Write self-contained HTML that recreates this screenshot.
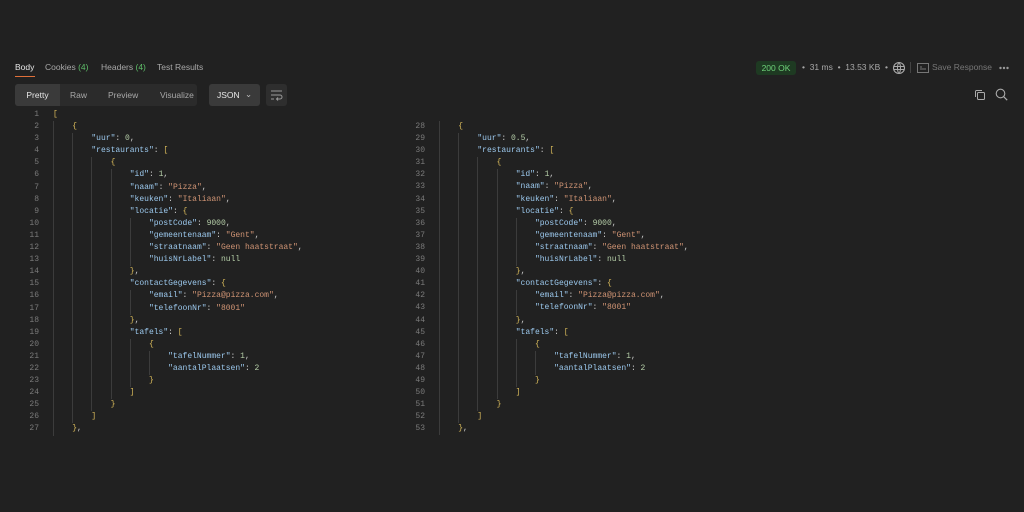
<!DOCTYPE html>
<html><head><meta charset="utf-8"><style>
body{margin:0;width:1024px;height:512px;background:#212121;overflow:hidden;font-family:"Liberation Sans",sans-serif;position:relative}
.abs{position:absolute}
.tab{position:absolute;top:62px;font-size:8.5px;color:#a8a8a8}
.code{position:absolute;font-family:"Liberation Mono",monospace;font-size:8px;line-height:12.1px;color:#cfcfcf;white-space:pre}
.ln{position:absolute;font-family:"Liberation Mono",monospace;font-size:8px;line-height:12.1px;color:#7a7a7a;text-align:right;width:30px;white-space:pre}
.g{display:inline-block;width:19.2px;height:12.1px;border-left:1px solid #3c3c3c;box-sizing:border-box;vertical-align:top}
.k{color:#9cc9ee}.s{color:#d09474}.n{color:#b5cea8}.b{color:#d6b85a}
</style></head><body>
<div class="tab" style="left:15px;color:#e6e6e6">Body</div>
<div class="abs" style="left:15px;top:76px;width:20px;height:1px;background:#e0703a"></div>
<div class="tab" style="left:45px">Cookies <span style="color:#5fbf6a">(4)</span></div>
<div class="tab" style="left:101px">Headers <span style="color:#5fbf6a">(4)</span></div>
<div class="tab" style="left:157px">Test Results</div>

<div class="abs" style="left:756px;top:61px;width:40px;height:14px;background:#1e3a22;border-radius:3px;color:#6fd27a;font-size:8.5px;line-height:14px;text-align:center">200 OK</div>
<div class="abs" style="left:802px;top:62px;font-size:8.5px;color:#a8a8a8">•&nbsp;&nbsp;31 ms&nbsp;&nbsp;•&nbsp;&nbsp;13.53 KB&nbsp;&nbsp;•</div>
<svg class="abs" style="left:892px;top:61px" width="14" height="14" viewBox="0 0 14 14"><circle cx="7" cy="7" r="5.5" fill="none" stroke="#a8a8a8" stroke-width="1.1"/><path d="M1.5 5.5h11M1.5 8.5h11M7 1.5c-2 2-2 9 0 11M7 1.5c2 2 2 9 0 11" fill="none" stroke="#a8a8a8" stroke-width="1"/></svg>
<div class="abs" style="left:910px;top:62px;width:1px;height:11px;background:#444"></div>
<svg class="abs" style="left:917px;top:63px" width="12" height="10" viewBox="0 0 12 10"><rect x="0.5" y="0.5" width="11" height="9" fill="none" stroke="#777"/><path d="M3 6h6M3 4h2" stroke="#777"/></svg>
<div class="abs" style="left:932px;top:62px;font-size:8.5px;color:#777">Save Response</div>
<svg class="abs" style="left:999px;top:66px" width="10" height="4" viewBox="0 0 10 4"><circle cx="1.5" cy="2" r="1.2" fill="#999"/><circle cx="5" cy="2" r="1.2" fill="#999"/><circle cx="8.5" cy="2" r="1.2" fill="#999"/></svg>

<div class="abs" style="left:15px;top:84px;width:182px;height:22px;background:#2b2b2b;border-radius:3px"></div>
<div class="abs" style="left:15px;top:84px;width:45px;height:22px;background:#3a3a3a;border-radius:3px 0 0 3px;color:#e8e8e8;font-size:8.5px;line-height:22px;text-align:center">Pretty</div>
<div class="abs" style="left:70px;top:84px;font-size:8.5px;line-height:22px;color:#a8a8a8">Raw</div>
<div class="abs" style="left:108px;top:84px;font-size:8.5px;line-height:22px;color:#a8a8a8">Preview</div>
<div class="abs" style="left:160px;top:84px;font-size:8.5px;line-height:22px;color:#a8a8a8">Visualize</div>
<div class="abs" style="left:209px;top:84px;width:51px;height:22px;background:#3a3a3a;border-radius:3px;color:#e8e8e8;font-size:8.5px;line-height:22px"><span style="margin-left:8px">JSON</span><span style="position:absolute;left:36px;top:-1px;color:#bbb">⌄</span></div>
<div class="abs" style="left:266px;top:84px;width:21px;height:22px;background:#2e2e2e;border-radius:3px"></div>
<svg class="abs" style="left:270px;top:89px" width="13" height="12" viewBox="0 0 13 12"><path d="M1 2h11M1 6h9a2 2 0 0 1 0 4H7M1 10h3" fill="none" stroke="#999" stroke-width="1"/><path d="M8 8.5l-1.5 1.5 1.5 1.5" fill="none" stroke="#999"/></svg>
<svg class="abs" style="left:974px;top:89px" width="12" height="12" viewBox="0 0 12 12"><rect x="3.5" y="3.5" width="7" height="7" rx="1" fill="none" stroke="#aaa"/><path d="M1.5 8V2.5a1 1 0 0 1 1-1H8" fill="none" stroke="#aaa"/></svg>
<svg class="abs" style="left:995px;top:88px" width="13" height="13" viewBox="0 0 13 13"><circle cx="5.5" cy="5.5" r="4.3" fill="none" stroke="#aaa" stroke-width="1.1"/><path d="M8.7 8.7l3.5 3.5" stroke="#aaa" stroke-width="1.2"/></svg>

<div class="ln" style="left:9px;top:109px">1
2
3
4
5
6
7
8
9
10
11
12
13
14
15
16
17
18
19
20
21
22
23
24
25
26
27</div>
<div class="code" style="left:53px;top:109px"><span class="b">[</span>
<span class="g"></span><span class="b">{</span>
<span class="g"></span><span class="g"></span><span class="k">"uur"</span>: <span class="n">0</span>,
<span class="g"></span><span class="g"></span><span class="k">"restaurants"</span>: <span class="b">[</span>
<span class="g"></span><span class="g"></span><span class="g"></span><span class="b">{</span>
<span class="g"></span><span class="g"></span><span class="g"></span><span class="g"></span><span class="k">"id"</span>: <span class="n">1</span>,
<span class="g"></span><span class="g"></span><span class="g"></span><span class="g"></span><span class="k">"naam"</span>: <span class="s">"Pizza"</span>,
<span class="g"></span><span class="g"></span><span class="g"></span><span class="g"></span><span class="k">"keuken"</span>: <span class="s">"Italiaan"</span>,
<span class="g"></span><span class="g"></span><span class="g"></span><span class="g"></span><span class="k">"locatie"</span>: <span class="b">{</span>
<span class="g"></span><span class="g"></span><span class="g"></span><span class="g"></span><span class="g"></span><span class="k">"postCode"</span>: <span class="n">9000</span>,
<span class="g"></span><span class="g"></span><span class="g"></span><span class="g"></span><span class="g"></span><span class="k">"gemeentenaam"</span>: <span class="s">"Gent"</span>,
<span class="g"></span><span class="g"></span><span class="g"></span><span class="g"></span><span class="g"></span><span class="k">"straatnaam"</span>: <span class="s">"Geen haatstraat"</span>,
<span class="g"></span><span class="g"></span><span class="g"></span><span class="g"></span><span class="g"></span><span class="k">"huisNrLabel"</span>: <span class="n">null</span>
<span class="g"></span><span class="g"></span><span class="g"></span><span class="g"></span><span class="b">}</span>,
<span class="g"></span><span class="g"></span><span class="g"></span><span class="g"></span><span class="k">"contactGegevens"</span>: <span class="b">{</span>
<span class="g"></span><span class="g"></span><span class="g"></span><span class="g"></span><span class="g"></span><span class="k">"email"</span>: <span class="s">"Pizza@pizza.com"</span>,
<span class="g"></span><span class="g"></span><span class="g"></span><span class="g"></span><span class="g"></span><span class="k">"telefoonNr"</span>: <span class="s">"8001"</span>
<span class="g"></span><span class="g"></span><span class="g"></span><span class="g"></span><span class="b">}</span>,
<span class="g"></span><span class="g"></span><span class="g"></span><span class="g"></span><span class="k">"tafels"</span>: <span class="b">[</span>
<span class="g"></span><span class="g"></span><span class="g"></span><span class="g"></span><span class="g"></span><span class="b">{</span>
<span class="g"></span><span class="g"></span><span class="g"></span><span class="g"></span><span class="g"></span><span class="g"></span><span class="k">"tafelNummer"</span>: <span class="n">1</span>,
<span class="g"></span><span class="g"></span><span class="g"></span><span class="g"></span><span class="g"></span><span class="g"></span><span class="k">"aantalPlaatsen"</span>: <span class="n">2</span>
<span class="g"></span><span class="g"></span><span class="g"></span><span class="g"></span><span class="g"></span><span class="b">}</span>
<span class="g"></span><span class="g"></span><span class="g"></span><span class="g"></span><span class="b">]</span>
<span class="g"></span><span class="g"></span><span class="g"></span><span class="b">}</span>
<span class="g"></span><span class="g"></span><span class="b">]</span>
<span class="g"></span><span class="b">}</span>,</div>

<div class="ln" style="left:395px;top:121px">28
29
30
31
32
33
34
35
36
37
38
39
40
41
42
43
44
45
46
47
48
49
50
51
52
53</div>
<div class="code" style="left:439px;top:121px"><span class="g"></span><span class="b">{</span>
<span class="g"></span><span class="g"></span><span class="k">"uur"</span>: <span class="n">0.5</span>,
<span class="g"></span><span class="g"></span><span class="k">"restaurants"</span>: <span class="b">[</span>
<span class="g"></span><span class="g"></span><span class="g"></span><span class="b">{</span>
<span class="g"></span><span class="g"></span><span class="g"></span><span class="g"></span><span class="k">"id"</span>: <span class="n">1</span>,
<span class="g"></span><span class="g"></span><span class="g"></span><span class="g"></span><span class="k">"naam"</span>: <span class="s">"Pizza"</span>,
<span class="g"></span><span class="g"></span><span class="g"></span><span class="g"></span><span class="k">"keuken"</span>: <span class="s">"Italiaan"</span>,
<span class="g"></span><span class="g"></span><span class="g"></span><span class="g"></span><span class="k">"locatie"</span>: <span class="b">{</span>
<span class="g"></span><span class="g"></span><span class="g"></span><span class="g"></span><span class="g"></span><span class="k">"postCode"</span>: <span class="n">9000</span>,
<span class="g"></span><span class="g"></span><span class="g"></span><span class="g"></span><span class="g"></span><span class="k">"gemeentenaam"</span>: <span class="s">"Gent"</span>,
<span class="g"></span><span class="g"></span><span class="g"></span><span class="g"></span><span class="g"></span><span class="k">"straatnaam"</span>: <span class="s">"Geen haatstraat"</span>,
<span class="g"></span><span class="g"></span><span class="g"></span><span class="g"></span><span class="g"></span><span class="k">"huisNrLabel"</span>: <span class="n">null</span>
<span class="g"></span><span class="g"></span><span class="g"></span><span class="g"></span><span class="b">}</span>,
<span class="g"></span><span class="g"></span><span class="g"></span><span class="g"></span><span class="k">"contactGegevens"</span>: <span class="b">{</span>
<span class="g"></span><span class="g"></span><span class="g"></span><span class="g"></span><span class="g"></span><span class="k">"email"</span>: <span class="s">"Pizza@pizza.com"</span>,
<span class="g"></span><span class="g"></span><span class="g"></span><span class="g"></span><span class="g"></span><span class="k">"telefoonNr"</span>: <span class="s">"8001"</span>
<span class="g"></span><span class="g"></span><span class="g"></span><span class="g"></span><span class="b">}</span>,
<span class="g"></span><span class="g"></span><span class="g"></span><span class="g"></span><span class="k">"tafels"</span>: <span class="b">[</span>
<span class="g"></span><span class="g"></span><span class="g"></span><span class="g"></span><span class="g"></span><span class="b">{</span>
<span class="g"></span><span class="g"></span><span class="g"></span><span class="g"></span><span class="g"></span><span class="g"></span><span class="k">"tafelNummer"</span>: <span class="n">1</span>,
<span class="g"></span><span class="g"></span><span class="g"></span><span class="g"></span><span class="g"></span><span class="g"></span><span class="k">"aantalPlaatsen"</span>: <span class="n">2</span>
<span class="g"></span><span class="g"></span><span class="g"></span><span class="g"></span><span class="g"></span><span class="b">}</span>
<span class="g"></span><span class="g"></span><span class="g"></span><span class="g"></span><span class="b">]</span>
<span class="g"></span><span class="g"></span><span class="g"></span><span class="b">}</span>
<span class="g"></span><span class="g"></span><span class="b">]</span>
<span class="g"></span><span class="b">}</span>,</div>
</body></html>
